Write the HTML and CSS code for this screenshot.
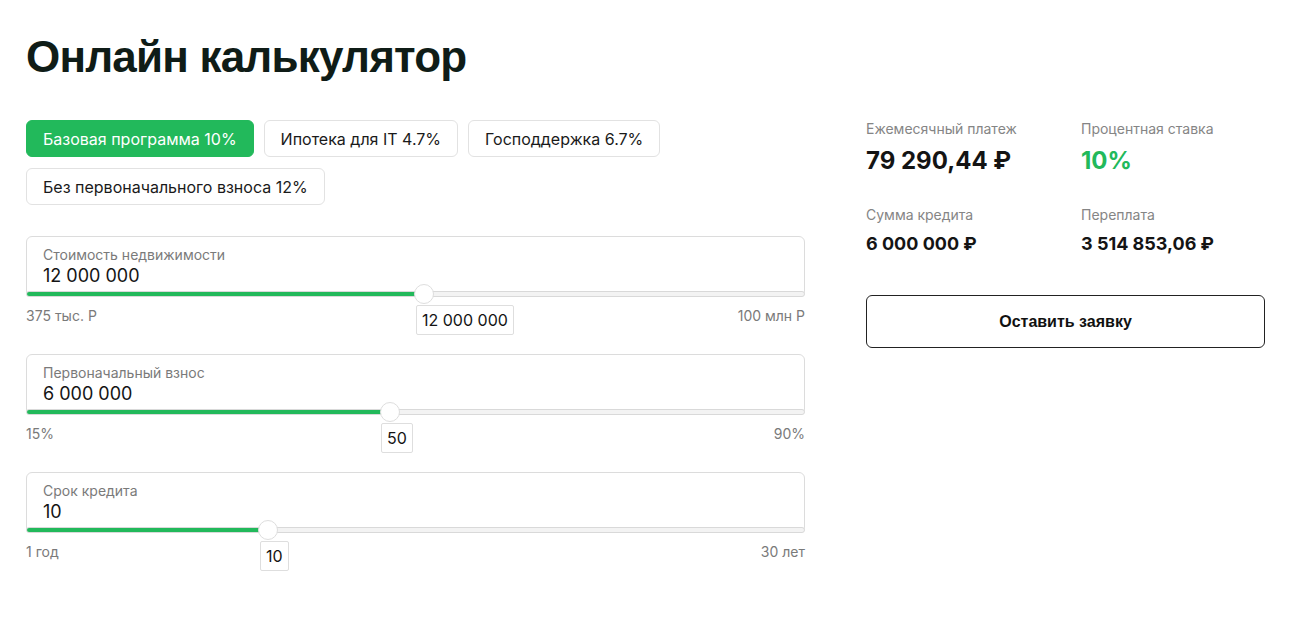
FILE: index.html
```html
<!DOCTYPE html>
<html lang="ru">
<head>
<meta charset="utf-8">
<title>Онлайн калькулятор</title>
<link rel="stylesheet" href="styles.css">
</head>
<body>
<div class="page">
  <h1 class="title">Онлайн калькулятор</h1>
  <div class="layout">
    <div class="calc">
      <div class="chips">
        <button class="chip chip-active">Базовая программа 10%</button>
        <button class="chip">Ипотека для IT 4.7%</button>
        <button class="chip">Господдержка 6.7%</button>
        <button class="chip">Без первоначального взноса 12%</button>
      </div>

      <div class="field">
        <div class="field-box">
          <div class="field-label">Стоимость недвижимости</div>
          <div class="field-value">12 000 000</div>
        </div>
        <div class="slider">
          <div class="track"><div class="fill" style="width:398px"></div></div>
          <div class="thumb" style="left:388px"></div>
          <div class="bubble" style="left:390px">12 000 000</div>
        </div>
        <div class="range"><span>375 тыс. Р</span><span>100 млн Р</span></div>
      </div>

      <div class="field">
        <div class="field-box">
          <div class="field-label">Первоначальный взнос</div>
          <div class="field-value">6 000 000</div>
        </div>
        <div class="slider">
          <div class="track"><div class="fill" style="width:364px"></div></div>
          <div class="thumb" style="left:354px"></div>
          <div class="bubble" style="left:355px">50</div>
        </div>
        <div class="range"><span>15%</span><span>90%</span></div>
      </div>

      <div class="field">
        <div class="field-box">
          <div class="field-label">Срок кредита</div>
          <div class="field-value">10</div>
        </div>
        <div class="slider">
          <div class="track"><div class="fill" style="width:242px"></div></div>
          <div class="thumb" style="left:232px"></div>
          <div class="bubble" style="left:234px">10</div>
        </div>
        <div class="range"><span>1 год</span><span>30 лет</span></div>
      </div>
    </div>

    <div class="summary">
      <div class="stats">
        <div class="stat">
          <div class="stat-label">Ежемесячный платеж</div>
          <div class="stat-value stat-big">79 290,44 ₽</div>
        </div>
        <div class="stat">
          <div class="stat-label">Процентная ставка</div>
          <div class="stat-value stat-big stat-green">10%</div>
        </div>
        <div class="stat">
          <div class="stat-label">Сумма кредита</div>
          <div class="stat-value">6 000 000 ₽</div>
        </div>
        <div class="stat">
          <div class="stat-label">Переплата</div>
          <div class="stat-value">3 514 853,06 ₽</div>
        </div>
      </div>
      <button class="apply">Оставить заявку</button>
    </div>
  </div>
</div>
</body>
</html>
```

FILE: styles.css
```css
* { box-sizing: border-box; }
html, body { margin: 0; padding: 0; background: #fff; }
body {
  min-height: 623px;
  font-family: Inter, "Noto Sans", sans-serif;
  color: #141414;
}
.page {
  padding: 29px 44px 60px 26px;
}
.title {
  margin: 0 0 35px;
  font-family: "Liberation Sans", Arial, sans-serif;
  font-weight: 700;
  font-size: 44px;
  letter-spacing: -0.8px;
  line-height: 56px;
  color: #0f1c17;
}
.layout {
  display: flex;
  gap: 61px;
}
.calc {
  width: 779px;
  display: flex;
  flex-direction: column;
  gap: 30px;
}
.chips {
  display: flex;
  flex-wrap: wrap;
  gap: 11px 10px;
  width: 660px;
  margin-bottom: 1px;
}
.chip {
  height: 37px;
  padding: 0 16px;
  border: 1px solid #e2e2e2;
  border-radius: 6px;
  background: #fff;
  font-family: Inter, "Noto Sans", sans-serif;
  font-size: 16px;
  color: #1a1a1a;
  cursor: pointer;
}
.chip-active {
  background: #22b95b;
  border-color: #22b95b;
  color: #fff;
}
.field {
  display: flex;
  flex-direction: column;
}
.field-box {
  border: 1px solid #dcdcdc;
  border-radius: 6px;
  padding: 9px 16px 8px;
}
.field-label {
  font-size: 14px;
  line-height: 18px;
  color: #7a7a7a;
}
.field-value {
  font-size: 18px;
  line-height: 24px;
  color: #141414;
}
.slider {
  position: relative;
  height: 6px;
  margin-top: -6px;
}
.track {
  height: 6px;
  border: 1px solid #d9d9d9;
  border-radius: 3px;
  background: #f3f3f3;
  overflow: hidden;
}
.fill {
  margin: -1px 0 0 -1px;
  height: 6px;
  background: #22b95b;
  border-radius: 3px 0 0 3px;
}
.thumb {
  position: absolute;
  top: -7px;
  width: 20px;
  height: 20px;
  border-radius: 50%;
  background: #fff;
  border: 1px solid #dedede;
}
.bubble {
  position: absolute;
  top: 14px;
  height: 30px;
  padding: 1px 5px 0;
  border: 1px solid #dedede;
  border-radius: 2px;
  background: #fff;
  font-size: 16px;
  line-height: 27px;
  color: #141414;
  white-space: nowrap;
}
.range {
  display: flex;
  justify-content: space-between;
  margin-top: 11px;
  font-size: 14px;
  line-height: 16px;
  color: #7a7a7a;
}
.summary {
  width: 399px;
  display: flex;
  flex-direction: column;
}
.stats {
  display: grid;
  grid-template-columns: 215px 1fr;
  row-gap: 30px;
}
.stat-label {
  font-size: 14px;
  line-height: 17px;
  color: #858585;
}
.stat-value {
  margin-top: 10px;
  font-size: 18px;
  line-height: 22px;
  font-weight: 700;
  color: #141414;
}
.stat-big {
  margin-top: 9px;
  font-size: 24px;
  line-height: 30px;
}
.stat-green { color: #22b95b; }
.apply {
  margin-top: 40px;
  height: 53px;
  width: 100%;
  border: 1px solid #222;
  border-radius: 6px;
  background: #fff;
  font-family: "Liberation Sans", Arial, sans-serif;
  font-weight: 700;
  font-size: 16px;
  color: #111;
  cursor: pointer;
}
```
